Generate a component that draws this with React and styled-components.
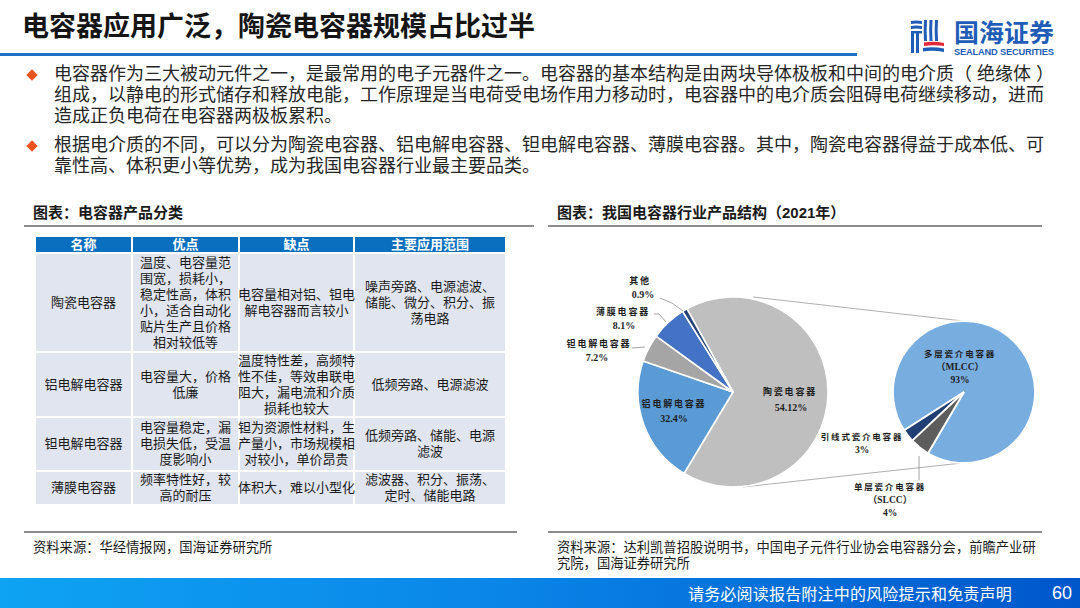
import React from "react";
import styled, { createGlobalStyle } from "styled-components";

const SANS = `"Liberation Sans", "Noto Sans CJK SC", sans-serif`;
const SERIF = `"Liberation Serif", "Noto Sans CJK SC", serif`;

const GlobalStyle = createGlobalStyle`
  html, body {
    margin: 0;
    padding: 0;
    background: #fff;
  }
  body {
    width: 1080px;
    height: 608px;
    overflow: hidden;
    font-family: ${SANS};
    color: #1a1a1a;
  }
`;

const Page = styled.div`
  width: 1080px;
  height: 608px;
  display: flex;
  flex-direction: column;
`;

const Header = styled.header`
  display: flex;
  align-items: flex-start;
  height: 57px;
`;

const TitleBlock = styled.div`
  width: 857px;
  padding: 11px 0 9px 22px;
  box-sizing: border-box;
  border-bottom: 3px solid #1f6fc5;
`;

const Title = styled.h1`
  margin: 0;
  font-size: 27px;
  line-height: 33px;
  font-weight: 700;
  color: #151515;
  white-space: nowrap;
`;

const Logo = styled.div`
  display: flex;
  align-items: flex-start;
  gap: 8px;
  margin: 19px 0 0 53px;
`;

const LogoText = styled.div`
  display: flex;
  flex-direction: column;
  color: #1f5db7;
`;

const LogoCn = styled.span`
  font-size: 25px;
  line-height: 28px;
  font-weight: 700;
  white-space: nowrap;
`;

const LogoEn = styled.span`
  font-size: 9.3px;
  line-height: 10px;
  font-weight: 700;
  letter-spacing: -0.2px;
  white-space: nowrap;
`;

const Bullets = styled.section`
  display: flex;
  flex-direction: column;
  gap: 8px;
  margin-top: 7px;
`;

const Bullet = styled.div`
  display: flex;
  align-items: flex-start;
`;

const Diamond = styled.span`
  width: 8px;
  height: 8px;
  flex: none;
  margin: 6.5px 18px 0 28px;
  background: #e8531f;
  transform: rotate(45deg);
`;

const BulletText = styled.p`
  margin: 0;
  font-size: 18px;
  line-height: 21px;
  color: #262626;
  white-space: nowrap;
`;

const Panels = styled.main`
  display: grid;
  grid-template-columns: 510px 494px;
  column-gap: 14px;
  padding-left: 24px;
  margin-top: 26px;
`;

const Panel = styled.div`
  display: flex;
  flex-direction: column;
`;

const Caption = styled.div`
  padding: 0 0 2px 9px;
  font-size: 15px;
  line-height: 20px;
  font-weight: 700;
  color: #1a1a1a;
  border-bottom: 2px solid #8c8c8c;
  white-space: nowrap;
`;

const Body = styled.div`
  height: 304px;
  display: flex;
  flex-direction: column;
  align-items: flex-start;
`;

const Source = styled.div`
  width: ${(p) => p.$lineWidth}px;
  border-top: 2px solid #8c8c8c;
  padding: 7px 0 0 9px;
  box-sizing: border-box;
  font-size: 13.3px;
  line-height: 16px;
  color: #1a1a1a;
  white-space: nowrap;
`;

const Table = styled.div`
  display: grid;
  grid-template-columns: 95px 105px 113px 150px;
  gap: 2px;
  margin: 10px 0 0 12px;
  background: #fff;
`;

const HeadCell = styled.div`
  background: #0b6fc0;
  color: #fff;
  font-size: 13px;
  line-height: 15px;
  font-weight: 700;
  text-align: center;
`;

const Cell = styled.div`
  background: #e0e5f0;
  height: ${(p) => p.$h}px;
  display: flex;
  align-items: center;
  justify-content: center;
  text-align: center;
  font-size: 13px;
  line-height: 16px;
  color: #1a1a1a;
  white-space: nowrap;
`;

const Chart = styled.svg`
  display: block;
  width: 494px;
  height: 304px;
`;

const Label = styled.text`
  font-family: ${SERIF};
  font-size: ${(p) => p.$size || 9}px;
  font-weight: 700;
  letter-spacing: ${(p) => (p.$spread ? 1.8 : 0)}px;
  fill: #1e1e1e;
  text-anchor: middle;
  dominant-baseline: central;
`;

const Footer = styled.footer`
  margin-top: auto;
  height: 30px;
  display: flex;
  align-items: center;
  justify-content: flex-end;
  gap: 40px;
  padding-right: 8px;
  background: linear-gradient(90deg, #0ea3f3 0%, #0a86e8 45%, #0057cb 100%);
  color: #fff;
`;

const Disclaimer = styled.span`
  font-size: 16px;
  letter-spacing: 0.2px;
`;

const PageNo = styled.span`
  font-size: 18px;
`;

const rows = [
  {
    h: 97,
    name: ["陶瓷电容器"],
    pros: ["温度、电容量范", "围宽，损耗小，", "稳定性高，体积", "小，适合自动化", "贴片生产且价格", "相对较低等"],
    cons: ["电容量相对铝、钽电", "解电容器而言较小"],
    apps: ["噪声旁路、电源滤波、", "储能、微分、积分、振", "荡电路"],
  },
  {
    h: 63,
    name: ["铝电解电容器"],
    pros: ["电容量大，价格", "低廉"],
    cons: ["温度特性差，高频特", "性不佳，等效串联电", "阻大，漏电流和介质", "损耗也较大"],
    apps: ["低频旁路、电源滤波"],
  },
  {
    h: 52,
    name: ["钽电解电容器"],
    pros: ["电容量稳定，漏", "电损失低，受温", "度影响小"],
    cons: ["钽为资源性材料，生", "产量小，市场规模相", "对较小，单价昂贵"],
    apps: ["低频旁路、储能、电源", "滤波"],
  },
  {
    h: 32,
    name: ["薄膜电容器"],
    pros: ["频率特性好，较", "高的耐压"],
    cons: ["体积大，难以小型化"],
    apps: ["滤波器、积分、振荡、", "定时、储能电路"],
  },
];

const Lines = ({ lines }) =>
  lines.map((l, i) => (
    <React.Fragment key={i}>
      {i > 0 && <br />}
      {l}
    </React.Fragment>
  ));

const pt = (cx, cy, r, a) => {
  const rad = (a * Math.PI) / 180;
  return [cx + r * Math.sin(rad), cy - r * Math.cos(rad)];
};

const slice = (cx, cy, r, a0, a1) => {
  const [x0, y0] = pt(cx, cy, r, a0);
  const [x1, y1] = pt(cx, cy, r, a1);
  const large = a1 - a0 > 180 ? 1 : 0;
  return `M${cx} ${cy} L${x0} ${y0} A${r} ${r} 0 ${large} 1 ${x1} ${y1} Z`;
};

const bigPie = [
  { a0: 331, a1: 571, fill: "#bfbfbf" },
  { a0: 211, a1: 289, fill: "#5b9bd5" },
  { a0: 289, a1: 306, fill: "#a5a5a5" },
  { a0: 306, a1: 328, fill: "#4472c4" },
  { a0: 328, a1: 331, fill: "#264478" },
];

const smallPie = [
  { a0: 237.3, a1: 570.5, fill: "#78ade0" },
  { a0: 226.7, a1: 237.3, fill: "#203f74" },
  { a0: 210.5, a1: 226.7, fill: "#5d5d5d" },
];

// 国海 mark: striped blue blocks with a red wave bar
const LogoMark = () => (
  <svg width="36" height="36" viewBox="0 0 36 36">
    <g fill="#1f5db7">
      <path d="M1 2 Q6 1 12 2 L12 5 Q6 4 1 5 Z" />
      <path d="M1 7 Q6 6 12 7 L12 10 Q6 9 1 10 Z" />
      <path d="M1 12 L12 12 L12 14.5 L9 14.5 L9 34 L6 34 L6 14.5 L4 14.5 L4 34 L1 34 Z" />
      <path d="M14 1 L17 1 Q16.3 11 17 22 L14 22 Q13.3 11 14 1 Z" />
      <path d="M19.5 1 L22.5 1 Q21.8 11 22.5 22 L19.5 22 Q18.8 11 19.5 1 Z" />
      <path d="M25 1 L28 1 Q27.3 11 28 22 L25 22 Q24.3 11 25 1 Z" />
      <path d="M13 29 Q23 27.5 34 29.5 L34 33 Q23 31 13 32.5 Z" />
    </g>
    <path d="M14 23.5 Q24 22 34 24 L34 27 Q24 25.5 14 27 Z" fill="#e3283a" />
  </svg>
);

const PieChart = () => (
  <Chart viewBox="0 0 494 304">
    <line x1="205" y1="70" x2="415" y2="94" stroke="#a6a6a6" strokeWidth="0.9" />
    <line x1="195" y1="260" x2="414" y2="236" stroke="#a6a6a6" strokeWidth="0.9" />
    {bigPie.map((s, i) => (
      <path key={i} d={slice(185, 165, 95, s.a0, s.a1)} fill={s.fill} stroke="#fff" strokeWidth="1.6" />
    ))}
    {smallPie.map((s, i) => (
      <path key={i} d={slice(416, 165, 71, s.a0, s.a1)} fill={s.fill} stroke="#fff" strokeWidth="1.8" />
    ))}

    <g stroke="#8c8c8c" strokeWidth="0.8" fill="none">
      <polyline points="112,71 124,76 135,84" />
      <polyline points="106,87 111,87 118,95" />
      <polyline points="84,121 97,120" />
      <polyline points="371,229 371,253" />
    </g>

    <Label x="92" y="54" $spread>其他</Label>
    <Label x="95" y="67" $size={10}>0.9%</Label>
    <Label x="75" y="85" $spread>薄膜电容器</Label>
    <Label x="76" y="98" $size={10}>8.1%</Label>
    <Label x="51" y="117" $spread>钽电解电容器</Label>
    <Label x="49" y="130" $size={10}>7.2%</Label>
    <Label x="126" y="177" $spread>铝电解电容器</Label>
    <Label x="126" y="191" $size={10}>32.4%</Label>
    <Label x="242" y="165" $spread>陶瓷电容器</Label>
    <Label x="243" y="180" $size={10}>54.12%</Label>

    <Label x="412" y="127" $size={8.5} $spread>多层瓷介电容器</Label>
    <Label x="412" y="140" $size={9.5}>（MLCC）</Label>
    <Label x="412" y="153" $size={9.5}>93%</Label>
    <Label x="314" y="210" $size={8.5} $spread>引线式瓷介电容器</Label>
    <Label x="314" y="223" $size={9.5}>3%</Label>
    <Label x="342" y="260" $size={8.5} $spread>单层瓷介电容器</Label>
    <Label x="342" y="273" $size={9.5}>（SLCC）</Label>
    <Label x="342" y="286" $size={9.5}>4%</Label>
  </Chart>
);

const App = () => (
  <Page>
    <GlobalStyle />
    <Header>
      <TitleBlock>
        <Title>电容器应用广泛，陶瓷电容器规模占比过半</Title>
      </TitleBlock>
      <Logo>
        <LogoMark />
        <LogoText>
          <LogoCn>国海证券</LogoCn>
          <LogoEn>SEALAND SECURITIES</LogoEn>
        </LogoText>
      </Logo>
    </Header>

    <Bullets>
      <Bullet>
        <Diamond />
        <BulletText>
          电容器作为三大被动元件之一，是最常用的电子元器件之一。电容器的基本结构是由两块导体极板和中间的电介质（ 绝缘体 ）
          <br />
          组成，以静电的形式储存和释放电能，工作原理是当电荷受电场作用力移动时，电容器中的电介质会阻碍电荷继续移动，进而
          <br />
          造成正负电荷在电容器两极板累积。
        </BulletText>
      </Bullet>
      <Bullet>
        <Diamond />
        <BulletText>
          根据电介质的不同，可以分为陶瓷电容器、铝电解电容器、钽电解电容器、薄膜电容器。其中，陶瓷电容器得益于成本低、可
          <br />
          靠性高、体积更小等优势，成为我国电容器行业最主要品类。
        </BulletText>
      </Bullet>
    </Bullets>

    <Panels>
      <Panel>
        <Caption>图表：电容器产品分类</Caption>
        <Body>
          <Table>
            <HeadCell>名称</HeadCell>
            <HeadCell>优点</HeadCell>
            <HeadCell>缺点</HeadCell>
            <HeadCell>主要应用范围</HeadCell>
            {rows.map((r, i) => (
              <React.Fragment key={i}>
                <Cell $h={r.h}>
                  <span><Lines lines={r.name} /></span>
                </Cell>
                <Cell $h={r.h}>
                  <span><Lines lines={r.pros} /></span>
                </Cell>
                <Cell $h={r.h}>
                  <span><Lines lines={r.cons} /></span>
                </Cell>
                <Cell $h={r.h}>
                  <span><Lines lines={r.apps} /></span>
                </Cell>
              </React.Fragment>
            ))}
          </Table>
        </Body>
        <Source $lineWidth={493}>资料来源：华经情报网，国海证券研究所</Source>
      </Panel>

      <Panel>
        <Caption>图表：我国电容器行业产品结构（2021年）</Caption>
        <Body>
          <PieChart />
        </Body>
        <Source $lineWidth={494}>
          资料来源：达利凯普招股说明书，中国电子元件行业协会电容器分会，前瞻产业研
          <br />
          究院，国海证券研究所
        </Source>
      </Panel>
    </Panels>

    <Footer>
      <Disclaimer>请务必阅读报告附注中的风险提示和免责声明</Disclaimer>
      <PageNo>60</PageNo>
    </Footer>
  </Page>
);

export default App;
